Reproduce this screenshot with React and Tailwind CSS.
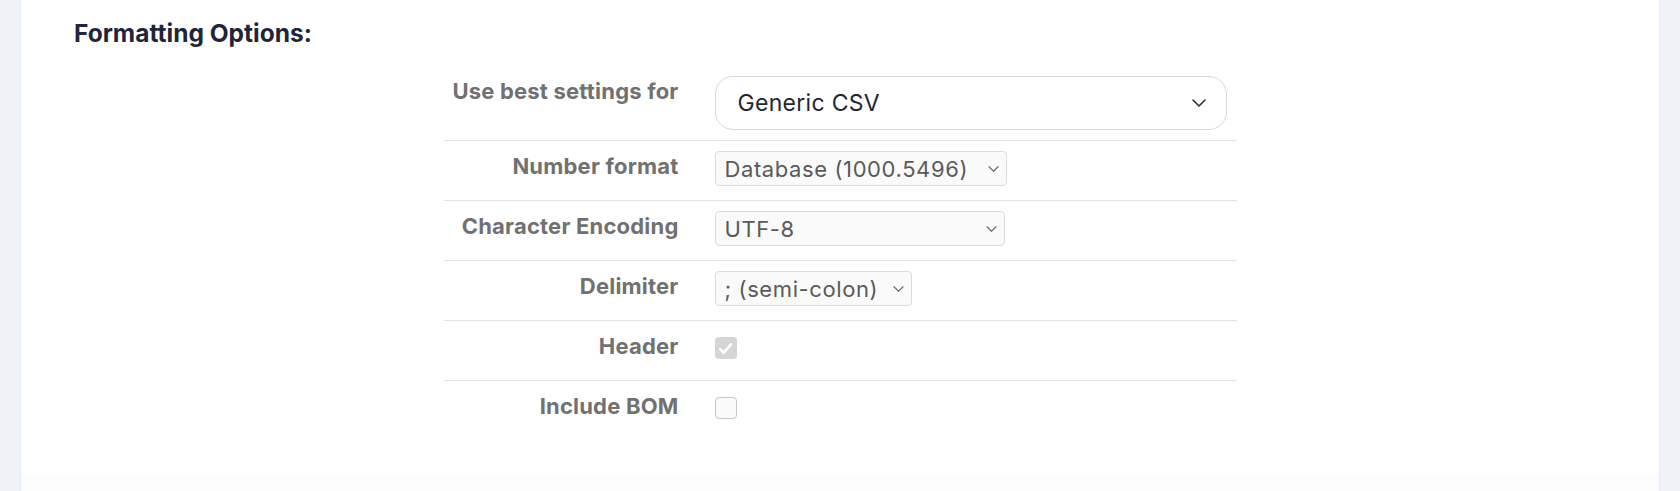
import React from "react";

const font = { fontFamily: "Inter, 'Noto Sans', sans-serif" };

const Chevron = ({ className }) => (
  <svg viewBox="0 0 14 8" className={className} fill="none">
    <path d="M1 1l6 6 6-6" stroke="currentColor" strokeWidth="1.6" strokeLinecap="round" strokeLinejoin="round" />
  </svg>
);

const SmallSelect = ({ value, width }) => (
  <div
    className={`flex h-[35px] items-center justify-between rounded-[4px] border border-[#dcdcdc] bg-[#fafafa] pl-[9px] pr-[7px] ${width}`}
  >
    <span className="text-[22px] leading-none tracking-[0.6px] text-[#5a5a5a]">{value}</span>
    <Chevron className="h-[6px] w-[11px] text-[#707070]" />
  </div>
);

const Checkbox = ({ checked }) =>
  checked ? (
    <div className="mt-[6px] flex h-[22px] w-[22px] items-center justify-center rounded-[4px] bg-[#d5d5d5]">
      <svg viewBox="0 0 16 16" className="h-[17px] w-[17px]" fill="none">
        <path d="M3 8.6l3.3 3.4L13.2 4" stroke="#fff" strokeWidth="2.4" strokeLinecap="round" strokeLinejoin="round" />
      </svg>
    </div>
  ) : (
    <div className="mt-[6px] h-[22px] w-[22px] rounded-[4px] border border-[#c6c6c6] bg-[#fafafa]" />
  );

const Row = ({ label, children, first, last }) => (
  <div
    className={`flex items-start pt-[10px] ${first ? "h-[75px]" : "h-[60px]"} ${last ? "" : "border-b border-[#dfe3e8]"}`}
  >
    <div className="w-[253px] shrink-0 pr-[18px] text-right text-[22px] font-bold leading-[30px] tracking-[0.2px] text-[#717171]">
      {label}
    </div>
    <div className="pl-[18px]">{children}</div>
  </div>
);

export default function App() {
  return (
    <div className="flex h-[491px] w-full bg-[#eff3f8]" style={font}>
      <div className="mx-[21px] flex flex-1 flex-col bg-white shadow-[0_0_2px_rgba(0,0,0,0.08)]">
        <h2 className="pl-[53px] pt-[17px] text-[24.5px] font-bold leading-[32px] text-[#1e2638]">
          Formatting Options:
        </h2>
        <div className="mx-auto mt-[17px] w-[793px]">
          <Row label="Use best settings for" first>
            <div className="flex h-[54px] w-[512px] items-center justify-between rounded-[18px] border border-[#d3dae2] pl-[22px] pr-[20px]">
              <span className="text-[23px] tracking-[0.3px] text-[#1e2638]">Generic CSV</span>
              <Chevron className="h-[8px] w-[14px] text-[#2a3040]" />
            </div>
          </Row>
          <Row label="Number format">
            <SmallSelect value="Database (1000.5496)" width="w-[292px]" />
          </Row>
          <Row label="Character Encoding">
            <SmallSelect value="UTF-8" width="w-[290px]" />
          </Row>
          <Row label="Delimiter">
            <SmallSelect value="; (semi-colon)" width="w-[197px]" />
          </Row>
          <Row label="Header">
            <Checkbox checked />
          </Row>
          <Row label="Include BOM" last>
            <Checkbox />
          </Row>
        </div>
        <div className="flex-1" />
        <div className="h-[16px] bg-[#fcfcfc]" />
      </div>
    </div>
  );
}
